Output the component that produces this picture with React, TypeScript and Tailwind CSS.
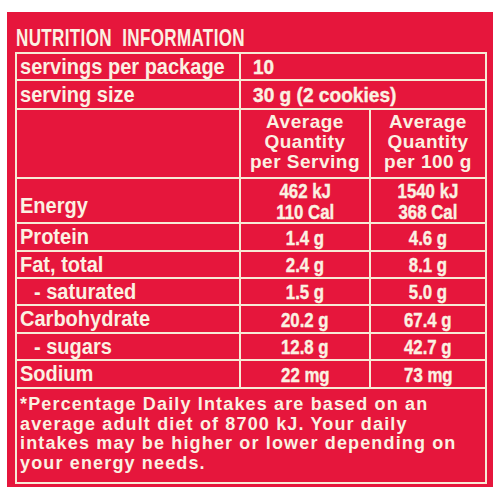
const rows = [
  { label: 'Protein', a: '1.4 g', b: '4.6 g', h: 'h-[28px]' },
  { label: 'Fat, total', a: '2.4 g', b: '8.1 g', h: 'h-[27px]' },
  { label: '- saturated', a: '1.5 g', b: '5.0 g', h: 'h-[27px]', sub: true },
  { label: 'Carbohydrate', a: '20.2 g', b: '67.4 g', h: 'h-[28px]' },
  { label: '- sugars', a: '12.8 g', b: '42.7 g', h: 'h-[27px]', sub: true },
  { label: 'Sodium', a: '22 mg', b: '73 mg', h: 'h-[28px]' },
];

const line = 'border-2 border-[#f7ead6]';
const sans = "font-['Liberation_Sans',Arial,sans-serif] font-bold";
const cell = `${sans} text-[22px] leading-none px-[3px] whitespace-nowrap`;
const head = `${sans} text-[19px] tracking-[0.5px] leading-[20px] text-center align-middle pb-[4px]`;
const num = `${sans} text-[21px] leading-none text-center align-middle [-webkit-text-stroke:0.4px_#fbf1e2]`;

function Squeeze({ children, k = 'scale-x-[0.8]' }: { children: React.ReactNode; k?: string }) {
  return <span className={`inline-block ${k}`}>{children}</span>;
}

function Label({ text }: { text: string }) {
  return <Squeeze k="origin-left scale-x-[0.91]">{text}</Squeeze>;
}

export default function App() {
  return (
    <div className="w-[500px] h-[500px] bg-white pt-[12px] pl-[7px]">
      <div className="w-[486px] h-[475px] bg-[#e6163c] text-[#fbf1e2] pt-[14px] pl-[8px]">
        <div className={`${sans} text-[24px] leading-none h-[26px] pl-[1px] whitespace-nowrap`}>
          <span className="inline-block origin-left scale-x-[0.71] tracking-[0.5px]">NUTRITION&nbsp; INFORMATION</span>
        </div>
        <table className="border-collapse w-[470px] table-fixed">
          <colgroup>
            <col className="w-[224px]" />
            <col className="w-[130px]" />
            <col className="w-[116px]" />
          </colgroup>
          <tbody>
            <tr className="h-[27px]">
              <td className={`${line} ${cell} align-middle`}><Label text="servings per package" /></td>
              <td colSpan={2} className={`${line} ${num} text-left px-[12px]`}>
                <Squeeze k="origin-left scale-x-[0.9]">10</Squeeze>
              </td>
            </tr>
            <tr className="h-[29px]">
              <td className={`${line} ${cell} align-middle`}><Label text="serving size" /></td>
              <td colSpan={2} className={`${line} ${num} text-left px-[12px]`}>
                <Squeeze k="origin-left scale-x-[0.91]">30 g (2 cookies)</Squeeze>
              </td>
            </tr>
            <tr className="h-[69px]">
              <td className={line}></td>
              <td className={`${line} ${head}`}>Average<br />Quantity<br />per Serving</td>
              <td className={`${line} ${head}`}>Average<br />Quantity<br />per 100 g</td>
            </tr>
            <tr className="h-[45px]">
              <td className={`${line} ${cell} align-bottom pb-[5px]`}><Label text="Energy" /></td>
              <td className={`${line} ${num} leading-[17px]`}>
                <Squeeze>462 kJ<br />110 Cal</Squeeze>
              </td>
              <td className={`${line} ${num} leading-[17px]`}>
                <Squeeze>1540 kJ<br />368 Cal</Squeeze>
              </td>
            </tr>
            {rows.map((r) => (
              <tr key={r.label} className={r.h}>
                <td className={`${line} ${cell} align-middle ${r.sub ? 'pl-[17px]' : ''}`}><Label text={r.label} /></td>
                <td className={`${line} ${num}`}><Squeeze>{r.a}</Squeeze></td>
                <td className={`${line} ${num}`}><Squeeze>{r.b}</Squeeze></td>
              </tr>
            ))}
            <tr className="h-[95px]">
              <td colSpan={3} className={`${line} ${sans} text-[18px] tracking-[1.15px] leading-[19.5px] px-[3px] pt-[6px] align-top whitespace-nowrap`}>
                *Percentage Daily Intakes are based on an<br />
                average adult diet of 8700 kJ. Your daily<br />
                intakes may be higher or lower depending on<br />
                your energy needs.
              </td>
            </tr>
          </tbody>
        </table>
      </div>
    </div>
  );
}
